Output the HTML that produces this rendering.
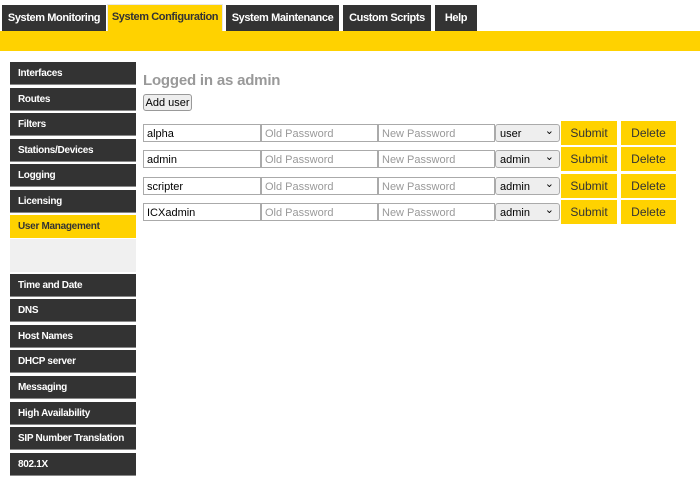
<!DOCTYPE html>
<html><head><style>
*{margin:0;padding:0;box-sizing:border-box}
body{width:700px;height:485px;background:#fff;font-family:"Liberation Sans",sans-serif;position:relative;overflow:hidden}
.t{position:absolute;top:5px;height:26px;background:#333;color:#fff;font-size:11px;line-height:27px;text-align:center;letter-spacing:-0.4px;font-weight:bold}
.t.a{background:#ffd200;color:#333;top:4px;height:27px;border:1px solid #e8e8e8;border-bottom:none;line-height:25px}
.bar{position:absolute;top:31px;left:0;width:700px;height:20px;background:#ffd200}
.s{position:absolute;left:10px;width:126px;height:23px;background:#333;color:#fff;font-size:10px;font-weight:bold;line-height:24px;padding-left:8px;letter-spacing:-0.3px;border-bottom:1px solid #888}
.s.a{background:#ffd200;color:#333;border:none}
h1{position:absolute;left:143px;top:72px;font-size:15px;color:#999;font-weight:bold;letter-spacing:-0.2px}
.btn{position:absolute;left:143px;top:94px;width:49px;height:17px;border:1px solid #999;border-radius:3px;background:#eee;font-size:11px;line-height:16px;text-align:center;color:#000}
.i{position:absolute;height:18px;border:1px solid #aaa;background:#fff;font-size:11px;line-height:18px;padding-left:3px;color:#000}
.p{color:#999}
.sel{position:absolute;left:495px;width:65px;height:18px;border:1px solid #aaa;border-radius:3px;background:#eee;font-size:11px;line-height:18px;padding-left:4px}
.sel:after{content:"⌄";position:absolute;right:5px;top:-3px;font-size:11px}
.y{position:absolute;height:24px;background:#ffd200;color:#333;font-size:12px;line-height:25px;text-align:center}
</style></head><body>
<div class="t" style="left:2px;width:104px">System Monitoring</div>
<div class="t a" style="left:107px;width:116px">System Configuration</div>
<div class="t" style="left:226px;width:113px">System Maintenance</div>
<div class="t" style="left:343px;width:88px">Custom Scripts</div>
<div class="t" style="left:435px;width:42px">Help</div>
<div class="bar"></div>
<div class="s" style="top:62px">Interfaces</div>
<div class="s" style="top:88px">Routes</div>
<div class="s" style="top:113px">Filters</div>
<div class="s" style="top:139px">Stations/Devices</div>
<div class="s" style="top:164px">Logging</div>
<div class="s" style="top:190px">Licensing</div>
<div class="s a" style="top:215px">User Management</div>
<div style="position:absolute;left:10px;top:239px;width:126px;height:33px;background:#f0f0f0"></div>
<div class="s" style="top:274px">Time and Date</div>
<div class="s" style="top:299px">DNS</div>
<div class="s" style="top:325px">Host Names</div>
<div class="s" style="top:350px">DHCP server</div>
<div class="s" style="top:376px">Messaging</div>
<div class="s" style="top:402px">High Availability</div>
<div class="s" style="top:427px">SIP Number Translation</div>
<div class="s" style="top:453px">802.1X</div>
<h1>Logged in as admin</h1>
<div class="btn">Add user</div>

<div class="i" style="left:143px;top:124px;width:118px">alpha</div><div class="i p" style="left:261px;top:124px;width:117px">Old Password</div><div class="i p" style="left:378px;top:124px;width:117px">New Password</div><div class="sel" style="top:124px">user</div><div class="y" style="left:561px;top:121px;width:56px">Submit</div><div class="y" style="left:621px;top:121px;width:55px">Delete</div>

<div class="i" style="left:143px;top:150px;width:118px">admin</div><div class="i p" style="left:261px;top:150px;width:117px">Old Password</div><div class="i p" style="left:378px;top:150px;width:117px">New Password</div><div class="sel" style="top:150px">admin</div><div class="y" style="left:561px;top:147px;width:56px">Submit</div><div class="y" style="left:621px;top:147px;width:55px">Delete</div>

<div class="i" style="left:143px;top:177px;width:118px">scripter</div><div class="i p" style="left:261px;top:177px;width:117px">Old Password</div><div class="i p" style="left:378px;top:177px;width:117px">New Password</div><div class="sel" style="top:177px">admin</div><div class="y" style="left:561px;top:174px;width:56px">Submit</div><div class="y" style="left:621px;top:174px;width:55px">Delete</div>

<div class="i" style="left:143px;top:203px;width:118px">ICXadmin</div><div class="i p" style="left:261px;top:203px;width:117px">Old Password</div><div class="i p" style="left:378px;top:203px;width:117px">New Password</div><div class="sel" style="top:203px">admin</div><div class="y" style="left:561px;top:200px;width:56px">Submit</div><div class="y" style="left:621px;top:200px;width:55px">Delete</div>
</body></html>
